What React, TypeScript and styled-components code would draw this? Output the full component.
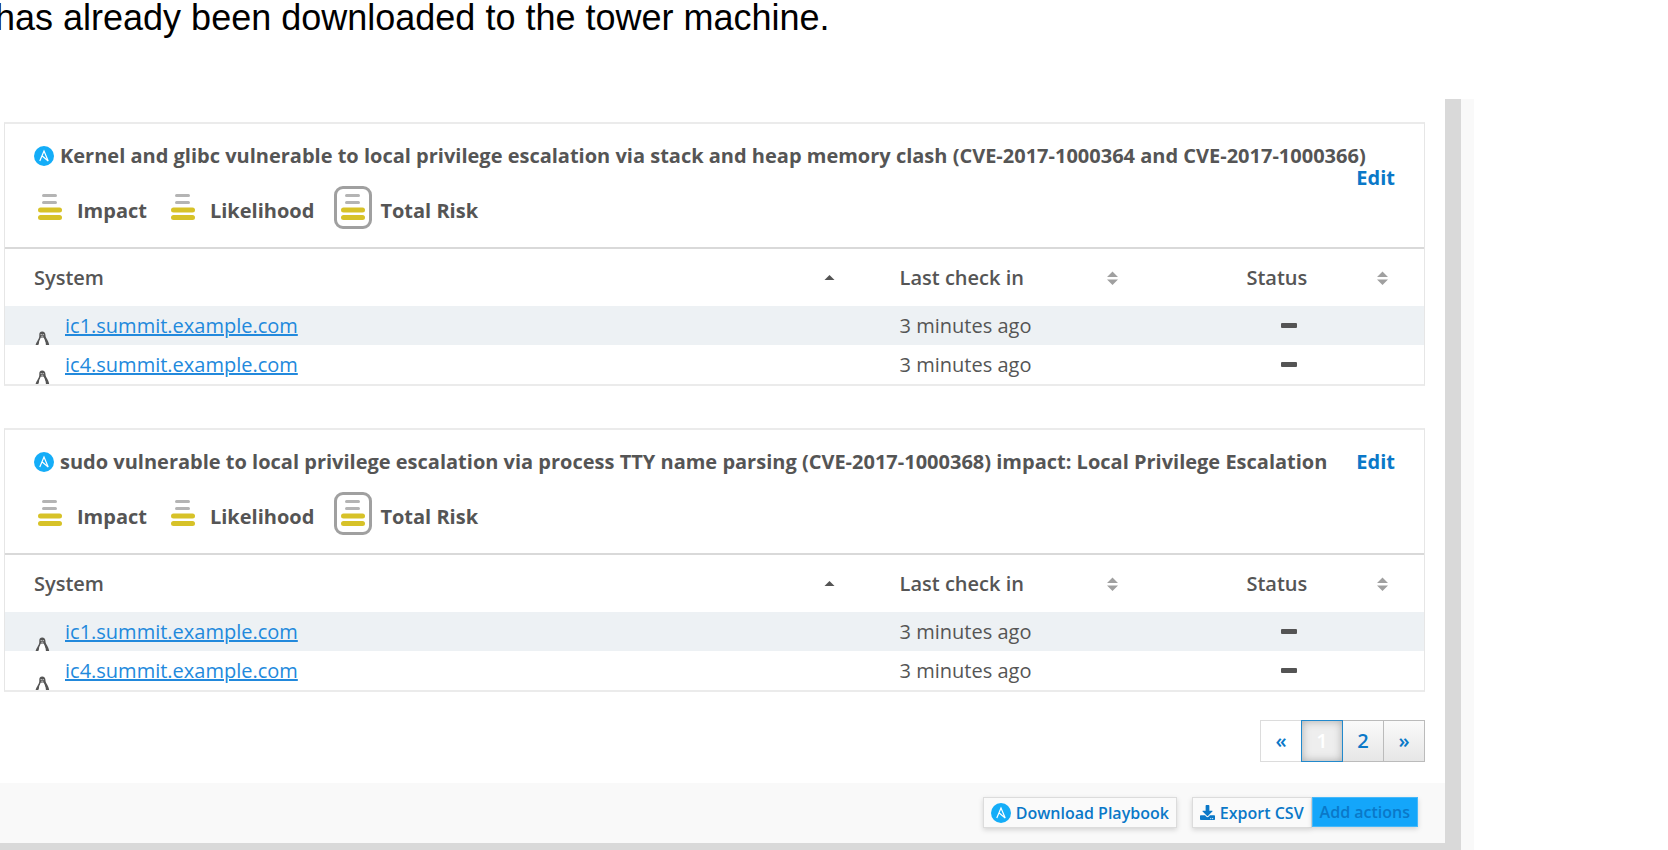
import React from "react";
import styled, { createGlobalStyle } from "styled-components";
import { FaDownload } from "react-icons/fa";

const Global = createGlobalStyle`
  * { box-sizing: border-box; }
  body { margin: 0; background: #fff; overflow-x: hidden; color: #555; font: 20px/26px "Open Sans", sans-serif; }
`;

const Page = styled.div`
  display: flex;
  flex-direction: column;
  min-height: 100vh;
`;
const Caption = styled.p`
  margin: 0 0 0 -5px;
  height: 99px;
  flex: none;
  color: #000;
  font: 36px/36px "Liberation Sans", Arial, sans-serif;
  white-space: nowrap;
`;
const Frame = styled.div`
  flex: 1;
  display: flex;
  margin-right: 194px;
  border-right: 13px solid #f9f9f9;
`;
const Window = styled.main`
  flex: 1;
  border-right: 16px solid #d9d9d9;
  border-bottom: 7px solid #d9d9d9;
  display: flex;
  flex-direction: column;
`;
const Content = styled.div`
  flex: 1;
  padding: 23px 20px 0 4px;
`;
const Card = styled.section`
  margin-bottom: 42px;
  border: 1px solid #e6e6e6;
  border-width: 2px 1px;
  border-color: #ebebeb #e6e6e6;
`;
const CardHead = styled.header`
  position: relative;
  height: 125px;
  padding: 19px 28px 0 29px;
  border-bottom: 2px solid #d9d9d9;
`;
const Title = styled.h2`
  display: flex;
  align-items: center;
  gap: 6px;
  margin: 0;
  font-size: 20px;
  line-height: 26px;
  font-weight: 700;
  white-space: nowrap;
`;
const EditLink = styled.a<{ $below?: boolean }>`
  position: absolute;
  right: 29px;
  top: ${(p) => (p.$below ? 41 : 19)}px;
  color: #0a78c8;
  font-weight: 700;
  text-decoration: none;
`;
const Risks = styled.div`
  display: flex;
  align-items: center;
  margin-top: 16px;
  height: 44px;
`;
const Risk = styled.div`
  display: flex;
  align-items: center;
  margin-right: 20px;
  font-weight: 700;
`;
const RiskIcon = styled.span<{ $boxed?: boolean }>`
  display: flex;
  justify-content: center;
  width: ${(p) => (p.$boxed ? 38 : 32)}px;
  padding: 5px 0 6px;
  margin-right: ${(p) => (p.$boxed ? 8 : 11)}px;
  border: ${(p) => (p.$boxed ? "3px solid #a0a0a0" : "none")};
  border-radius: 9px;
`;
const RiskLabel = styled.span`
  padding-top: 8px;
`;
const Table = styled.table`
  width: 100%;
  table-layout: fixed;
  border-collapse: collapse;
  text-align: left;
`;
const HeadCell = styled.th<{ $width?: string; $indent?: boolean }>`
  width: ${(p) => p.$width || "auto"};
  height: 57px;
  padding: 0 36px 0 ${(p) => (p.$indent ? 92 : 29)}px;
  font-weight: 600;
`;
const SortButton = styled.button`
  display: flex;
  align-items: center;
  justify-content: space-between;
  width: 100%;
  padding: 0;
  border: 0;
  background: none;
  color: inherit;
  font: inherit;
`;
const Row = styled.tr`
  &:nth-child(odd) { background: #edf1f4; }
`;
const Cell = styled.td<{ $indent?: boolean }>`
  height: 39px;
  padding: 0 0 0 ${(p) => (p.$indent ? 92 : 29)}px;
  vertical-align: middle;
`;
const System = styled.div`
  display: flex;
  align-items: center;
  height: 39px;
  gap: 14px;
  svg { align-self: flex-end; }
`;
const SystemLink = styled.a`
  color: #2289dc;
  text-decoration: underline;
`;
const Dash = styled.span`
  display: block;
  width: 16px;
  height: 5px;
  margin-left: 35px;
  border-radius: 1px;
  background: #545454;
`;
const Pager = styled.nav`
  display: flex;
  justify-content: flex-end;
  margin: -14px 0 20px;
`;
const PageButton = styled.button<{ $kind?: "plain" | "current" }>`
  width: 42px;
  height: 42px;
  margin-left: -1px;
  padding: 0;
  border: 1px solid ${(p) => (p.$kind === "current" ? "#2289cc" : p.$kind === "plain" ? "#dcdcdc" : "#bbb")};
  background: ${(p) => (p.$kind ? "#fff" : "linear-gradient(#fafafa, #e6e6e6)")};
  ${(p) => p.$kind === "current" && "background: #eee; box-shadow: inset 0 0 9px #aaa; z-index: 1;"}
  color: ${(p) => (p.$kind === "current" ? "#fff" : "#0a78c8")};
  font: 600 20px/26px "Open Sans", sans-serif;
`;
const Footer = styled.footer`
  display: flex;
  justify-content: flex-end;
  height: 60px;
  padding: 14px 27px 0 0;
  background: #f9f9f9;
`;
const Action = styled.button<{ $primary?: boolean }>`
  display: flex;
  align-items: center;
  gap: 5px;
  height: ${(p) => (p.$primary ? 30 : 31)}px;
  padding: 0 7px;
  border: 1px solid ${(p) => (p.$primary ? "#45b8fa" : "#dcdcdc")};
  background: ${(p) => (p.$primary ? "#14a6fa" : "#fafafa")};
  box-shadow: 0 2px 5px rgba(0, 0, 0, 0.15);
  color: #0a78c8;
  font: 600 16px/24px "Open Sans", sans-serif;
  white-space: nowrap;
`;
const Group = styled.div`
  display: flex;
  align-items: flex-start;
  margin-left: 15px;
`;

const AnsibleIcon = () => (
  <svg width="20" height="20" viewBox="0 0 20 20" aria-hidden="true">
    <circle cx="10" cy="10" r="10" fill="#14adf8" />
    <path d="M5.800 15 10 5l4.200 10-6-5" fill="none" stroke="#fff" strokeWidth="1.200" />
  </svg>
);
const BarsIcon = () => (
  <svg width="26" height="26" viewBox="0 0 26 26" aria-hidden="true">
    <rect x="5" y="0" width="15" height="3" rx="1.500" fill="#b4b4b4" />
    <rect x="5" y="7" width="15" height="3" rx="1.500" fill="#b4b4b4" />
    <rect x="1" y="13.500" width="24" height="5" rx="2.500" fill="#d7c228" />
    <rect x="1" y="21" width="24" height="5" rx="2.500" fill="#d7c228" />
  </svg>
);
const SortIcon = ({ up }: { up?: boolean }) => (
  <svg width="11" height="14" viewBox="0 0 11 14" aria-hidden="true">
    {up ? <path d="M.5 9 5.500 4l5 5z" fill="#545454" /> : <path d="M0 6 5.500 .5 11 6zM0 8.500h11L5.500 14z" fill="#a0a0a0" />}
  </svg>
);
const LinuxIcon = () => (
  <svg width="17" height="14" viewBox="0 0 17 14" aria-hidden="true">
    <path d="M5.300 4.500C5 1.800 6.200.4 8.200.4s3.300 1.400 3.300 4.100c0 2.500 3.200 5 3.700 9.500h-3.400L10.300 8.500 9 6.500H7.500L5.800 9 4.500 14H1.600C2.800 10 5.500 8 5.300 4.500z" fill="#555" />
    <path d="M6.800 6.500 8.200 7.600 9.700 6.400 11.600 11.500V14H4.700l.6-3.500z" fill="#fff" />
    <circle cx="7.200" cy="3.600" r=".7" fill="#ddd" />
    <circle cx="9.200" cy="3.600" r=".7" fill="#ddd" />
    <path d="M6.800 5.200 8.200 4.600l1.500.6-1.500 1z" fill="#aaa" />
  </svg>
);

const cards = [
  { title: "Kernel and glibc vulnerable to local privilege escalation via stack and heap memory clash (CVE-2017-1000364 and CVE-2017-1000366)", below: true },
  { title: "sudo vulnerable to local privilege escalation via process TTY name parsing (CVE-2017-1000368) impact: Local Privilege Escalation", below: false },
];
const systems = ["ic1.summit.example.com", "ic4.summit.example.com"];

export default function App() {
  return (
    <Page>
      <Global />
      <Caption>has already been downloaded to the tower machine.</Caption>
      <Frame>
        <Window>
          <Content>
            {cards.map((card) => (
              <Card key={card.title}>
                <CardHead>
                  <Title><AnsibleIcon />{card.title}</Title>
                  <EditLink href="#" $below={card.below}>Edit</EditLink>
                  <Risks>
                    {["Impact", "Likelihood", "Total Risk"].map((label) => (
                      <Risk key={label}>
                        <RiskIcon $boxed={label === "Total Risk"}><BarsIcon /></RiskIcon>
                        <RiskLabel>{label}</RiskLabel>
                      </Risk>
                    ))}
                  </Risks>
                </CardHead>
                <Table>
                  <thead>
                    <tr>
                      <HeadCell><SortButton>System<SortIcon up /></SortButton></HeadCell>
                      <HeadCell $width="20%"><SortButton>Last check in<SortIcon /></SortButton></HeadCell>
                      <HeadCell $width="19%" $indent><SortButton>Status<SortIcon /></SortButton></HeadCell>
                    </tr>
                  </thead>
                  <tbody>
                    {systems.map((name) => (
                      <Row key={name}>
                        <Cell><System><LinuxIcon /><SystemLink href="#">{name}</SystemLink></System></Cell>
                        <Cell>3 minutes ago</Cell>
                        <Cell $indent><Dash /></Cell>
                      </Row>
                    ))}
                  </tbody>
                </Table>
              </Card>
            ))}
            <Pager aria-label="Pages">
              <PageButton $kind="plain">«</PageButton>
              <PageButton $kind="current">1</PageButton>
              <PageButton>2</PageButton>
              <PageButton>»</PageButton>
            </Pager>
          </Content>
          <Footer>
            <Action><AnsibleIcon />Download Playbook</Action>
            <Group>
              <Action><FaDownload size={15} />Export CSV</Action>
              <Action $primary>Add actions</Action>
            </Group>
          </Footer>
        </Window>
      </Frame>
    </Page>
  );
}
